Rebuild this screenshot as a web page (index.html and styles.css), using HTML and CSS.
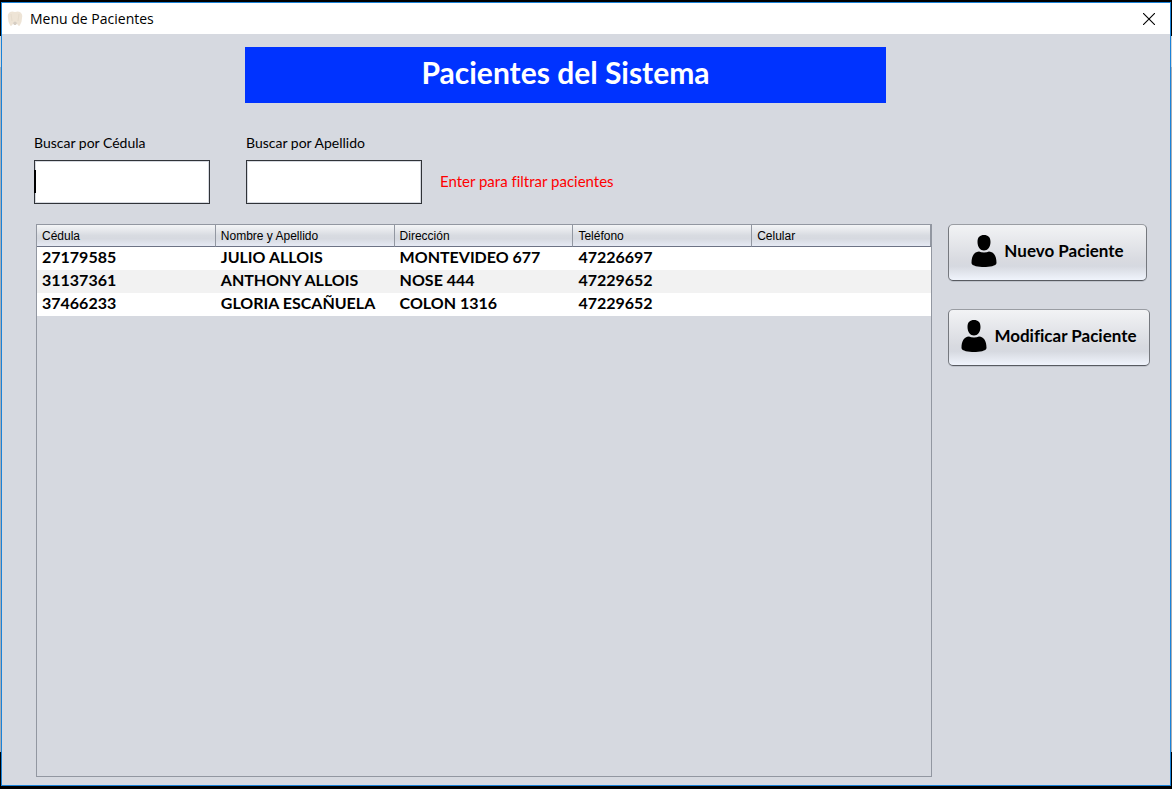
FILE: index.html
```html
<!DOCTYPE html>
<html lang="es">
<head>
<meta charset="utf-8">
<title>Menu de Pacientes</title>
<link rel="stylesheet" href="styles.css">
</head>
<body>
<div class="window">
  <header class="titlebar">
    <svg class="tooth" viewBox="0 0 16 16" aria-hidden="true">
      <path d="M3 1Q5 0 8 1Q11 0 13 1Q16 3 15 7Q15 11 13 14Q12 16 11 14L10 13Q8 12 6 13L5 14Q4 16 3 14Q1 11 1 7Q0 3 3 1Z" fill="#eee4d6"/>
      <path d="M4 3L5 10M12 3L11 10" stroke="#e6dccd" fill="none"/>
      <path d="M6 12Q8 9 10 12L9 14H7Z" fill="#d6cec4"/>
    </svg>
    <h1 class="title">Menu de Pacientes</h1>
    <button class="close" type="button" aria-label="Cerrar">
      <svg viewBox="0 0 12 12" width="12" height="12" aria-hidden="true"><path d="M0 0L12 12M12 0L0 12" stroke="#000" stroke-width="1.1"/></svg>
    </button>
  </header>
  <main class="content">
    <h2 class="banner">Pacientes del Sistema</h2>
    <form class="filters">
      <div class="field">
        <label for="cedula">Buscar por Cédula</label>
        <div class="entry active"><input id="cedula" type="text"></div>
      </div>
      <div class="field">
        <label for="apellido">Buscar por Apellido</label>
        <div class="entry"><input id="apellido" type="text"></div>
      </div>
      <p class="hint">Enter para filtrar pacientes</p>
    </form>
    <div class="body">
      <div class="panel">
        <table class="patients">
          <thead>
            <tr><th>Cédula</th><th>Nombre y Apellido</th><th>Dirección</th><th>Teléfono</th><th>Celular</th></tr>
          </thead>
          <tbody>
            <tr><td>27179585</td><td>JULIO ALLOIS</td><td>MONTEVIDEO 677</td><td>47226697</td><td></td></tr>
            <tr><td>31137361</td><td>ANTHONY ALLOIS</td><td>NOSE 444</td><td>47229652</td><td></td></tr>
            <tr><td>37466233</td><td>GLORIA ESCAÑUELA</td><td>COLON 1316</td><td>47229652</td><td></td></tr>
          </tbody>
        </table>
      </div>
      <div class="actions">
        <button class="action new" type="button">
          <svg class="person" viewBox="0 0 26 34" aria-hidden="true"><path d="M13 1C17 1 19.500 3 19.500 8C19.500 13 16.500 16.500 13 16.500C9.500 16.500 6.500 13 6.500 8C6.500 3 9 1 13 1ZM8 17.500Q10 18.500 13 18.500Q16 18.500 18 17.500C23 18 25.500 22 25.500 29C25.500 32 18 33 13 33C8 33 .5 32 .5 29C.5 22 3 18 8 17.500Z"/></svg>
          <span>Nuevo Paciente</span>
        </button>
        <button class="action" type="button">
          <svg class="person" viewBox="0 0 26 34" aria-hidden="true"><path d="M13 1C17 1 19.500 3 19.500 8C19.500 13 16.500 16.500 13 16.500C9.500 16.500 6.500 13 6.500 8C6.500 3 9 1 13 1ZM8 17.500Q10 18.500 13 18.500Q16 18.500 18 17.500C23 18 25.500 22 25.500 29C25.500 32 18 33 13 33C8 33 .5 32 .5 29C.5 22 3 18 8 17.500Z"/></svg>
          <span>Modificar Paciente</span>
        </button>
      </div>
    </div>
  </main>
</div>
</body>
</html>
```
FILE: styles.css
```css
* {
  box-sizing: border-box;
}

body {
  margin: 0;
  min-height: 100vh;
  display: flex;
  padding: 2px 1px 3px;
  background: linear-gradient(#000 36px, #d5d5d5 36px, #d5d5d5 67px, #a9adb3 67px, #a9adb3 752px, #000 752px);
  font-family: Lato, "Open Sans", sans-serif;
  font-variant-ligatures: none;
  color: #000;
}

.window {
  flex: 1;
  display: flex;
  flex-direction: column;
  border: 1px solid #1a82d8;
  background: #d6d9e0;
  box-shadow: 0 3px #000;
}

.titlebar {
  display: flex;
  align-items: center;
  height: 31px;
  padding: 0 15px 0 5px;
  background: #fff;
}

.tooth {
  width: 16px;
  height: 16px;
  margin-right: 7px;
}

.title {
  margin: 0;
  flex: 1;
  font: 14px/20px "Open Sans", "Noto Sans", sans-serif;
}

.close {
  display: flex;
  padding: 0;
  border: 0;
  background: none;
}

.content {
  flex: 1;
  display: flex;
  flex-direction: column;
  padding: 13px 20px 8px 32px;
}

.banner {
  margin: 0 264px 0 211px;
  padding-bottom: 6px;
  background: #0033ff;
  color: #fff;
  font-size: 30px;
  line-height: 50px;
  text-align: center;
}

.filters {
  display: flex;
  gap: 36px;
  margin-top: 31px;
  font-size: 14px;
  line-height: 18px;
}

.field {
  width: 176px;
}

.field label {
  display: block;
  margin-bottom: 8px;
}

.entry {
  position: relative;
}

.entry input {
  display: block;
  width: 100%;
  height: 44px;
  padding: 4px 6px;
  border: 1px solid #303338;
  background: #fff;
  box-shadow: inset 0 0 0 1px #d6d9e0;
  font: inherit;
}

.active::before {
  content: "";
  position: absolute;
  left: 0;
  top: 10px;
  width: 2px;
  height: 23px;
  background: #000;
}

.hint {
  margin: 38px 0 0 -18px;
  color: #ff0000;
  font-size: 15px;
}

.body {
  flex: 1;
  display: flex;
  align-items: stretch;
  gap: 16px;
  margin: 20px 0 0 2px;
}

.panel {
  flex: 1;
  border: 1px solid #9297a1;
}

.patients {
  width: 100%;
  table-layout: fixed;
  border-collapse: separate;
  border-spacing: 0;
  text-align: left;
}

.patients th {
  height: 22px;
  padding: 0 5px;
  border-right: 1px solid #9297a1;
  border-bottom: 1px solid #6d7385;
  background: linear-gradient(#f4f5f7, #d8dbe1 50%, #d6d9e0 65%, #e6eaf4);
  font: 12px/20px "Liberation Sans", Arial, sans-serif;
}

.patients td {
  height: 23px;
  padding: 0 5px 3px;
  background: #fff;
  font-size: 16px;
  font-weight: bold;
  line-height: 20px;
  white-space: nowrap;
}

.patients tr:nth-child(even) td {
  background: #f2f2f2;
}

.actions {
  width: 202px;
  display: flex;
  flex-direction: column;
  gap: 28px;
}

.action {
  display: flex;
  align-items: center;
  justify-content: center;
  gap: 7px;
  height: 57px;
  padding: 0 0 3px;
  border: 1px solid;
  border-color: #9a9da3 #75787e #585b61;
  border-radius: 5px;
  background: linear-gradient(#f2f3f5, #d8dae0 65%, #d6d9e0 75%, #f0f4fc);
  box-shadow: 0 1px #bfc3cb;
  color: #000;
  font: bold 17px/20px Lato, "Open Sans", sans-serif;
  font-variant-ligatures: none;
  white-space: nowrap;
}

.new {
  margin-right: 3px;
}

.person {
  width: 26px;
  height: 34px;
}
```
